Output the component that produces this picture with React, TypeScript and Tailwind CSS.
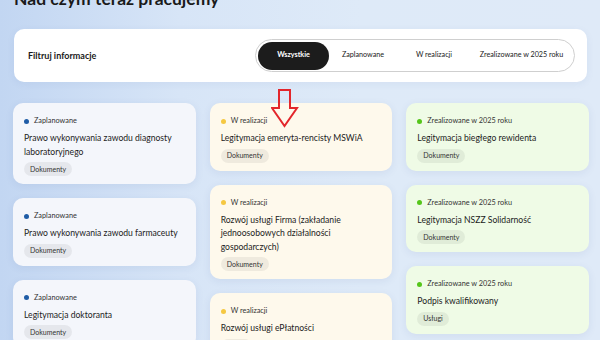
import React from 'react';

type Status = 'planned' | 'progress' | 'done';

interface Item {
  title: string;
  tag: string;
  status: Status;
}

const statusStyle: Record<Status, { label: string; dot: string; card: string }> = {
  planned: { label: 'Zaplanowane', dot: 'bg-[#1f5ca6]', card: 'bg-[#f4f6fb]' },
  progress: { label: 'W realizacji', dot: 'bg-[#f5c842]', card: 'bg-[#fef9ec]' },
  done: { label: 'Zrealizowane w 2025 roku', dot: 'bg-[#55c61a]', card: 'bg-[#effbe6]' },
};

const columns: Item[][] = [
  [
    { title: 'Prawo wykonywania zawodu diagnosty laboratoryjnego', tag: 'Dokumenty', status: 'planned' },
    { title: 'Prawo wykonywania zawodu farmaceuty', tag: 'Dokumenty', status: 'planned' },
    { title: 'Legitymacja doktoranta', tag: 'Dokumenty', status: 'planned' },
  ],
  [
    { title: 'Legitymacja emeryta-rencisty MSWiA', tag: 'Dokumenty', status: 'progress' },
    { title: 'Rozwój usługi Firma (zakładanie jednoosobowych działalności gospodarczych)', tag: 'Dokumenty', status: 'progress' },
    { title: 'Rozwój usługi ePłatności', tag: 'Usługi', status: 'progress' },
  ],
  [
    { title: 'Legitymacja biegłego rewidenta', tag: 'Dokumenty', status: 'done' },
    { title: 'Legitymacja NSZZ Solidarność', tag: 'Dokumenty', status: 'done' },
    { title: 'Podpis kwalifikowany', tag: 'Usługi', status: 'done' },
  ],
];

const filters = [
  { label: 'Wszystkie', w: 'w-[71px]', active: true },
  { label: 'Zaplanowane', w: 'w-[68px]', active: false },
  { label: 'W realizacji', w: 'w-[74px]', active: false },
  { label: 'Zrealizowane w 2025 roku', w: 'w-[101px]', active: false },
];

const WorkCard: React.FC<{ item: Item }> = ({ item }) => {
  const s = statusStyle[item.status];
  return (
    <div className={`${s.card} rounded-[10px] pt-[13px] pl-[11px] pr-[12px] pb-[8px] shadow-[0_2px_8px_rgba(40,70,130,0.08)]`}>
      <div className="flex items-center gap-[5px] h-[10px]">
        <span className={`w-[5px] h-[5px] rounded-full ${s.dot}`} />
        <span className="text-[7.3px] leading-[10px] text-[#333]">{s.label}</span>
      </div>
      <p className="mt-[6px] text-[8.6px] leading-[13.5px] text-[#222]">{item.title}</p>
      <span className="mt-[3px] flex w-fit items-center h-[14px] px-[6px] rounded-full bg-black/[0.06] text-[7px] text-[#333]">
        {item.tag}
      </span>
    </div>
  );
};

export default function App() {
  return (
    <div
      className="relative w-[600px] h-[340px] overflow-hidden bg-[linear-gradient(90deg,#c2d6f2_0%,#d7e5f7_30%,#deeaf8_60%,#dfeaf8_100%)]"
      style={{ fontFamily: 'Lato, "Noto Sans", sans-serif' }}
    >
      <h2 className="mt-[-12px] ml-[14px] text-[17.5px] leading-[21px] font-bold text-[#1a1a1a]">
        Nad czym teraz pracujemy
      </h2>

      <div className="mt-[20px] ml-[14px] w-[573px] h-[53px] bg-white rounded-[10px] flex items-center justify-between pl-[14px] pr-[12px] shadow-[0_2px_8px_rgba(40,70,130,0.06)]">
        <span className="text-[9px] font-bold text-[#1a1a1a]">Filtruj informacje</span>
        <div className="flex items-center h-[33px] p-[2px] border border-[#cfcfcf] rounded-full bg-white">
          {filters.map((f) => (
            <button
              key={f.label}
              className={`${f.w} h-[28px] rounded-full text-[7.2px] flex items-center justify-center ${
                f.active ? 'bg-[#1c1c1c] text-white font-bold' : 'text-[#222]'
              }`}
            >
              {f.label}
            </button>
          ))}
        </div>
      </div>

      <div className="mt-[21px] ml-[13px] w-[576px] grid grid-cols-3 gap-[14px]">
        {columns.map((col, i) => (
          <div key={i} className="flex flex-col gap-[14px]">
            {col.map((item) => (
              <WorkCard key={item.title} item={item} />
            ))}
          </div>
        ))}
      </div>

      <svg className="absolute left-[271px] top-[88px]" width="28" height="41" viewBox="0 0 28 41" fill="none">
        <polygon
          points="8,2 19,2 19,20 26,20 13.5,38 1,20 8,20"
          stroke="#e3262b"
          strokeWidth="2"
          strokeLinejoin="miter"
        />
      </svg>
    </div>
  );
}
